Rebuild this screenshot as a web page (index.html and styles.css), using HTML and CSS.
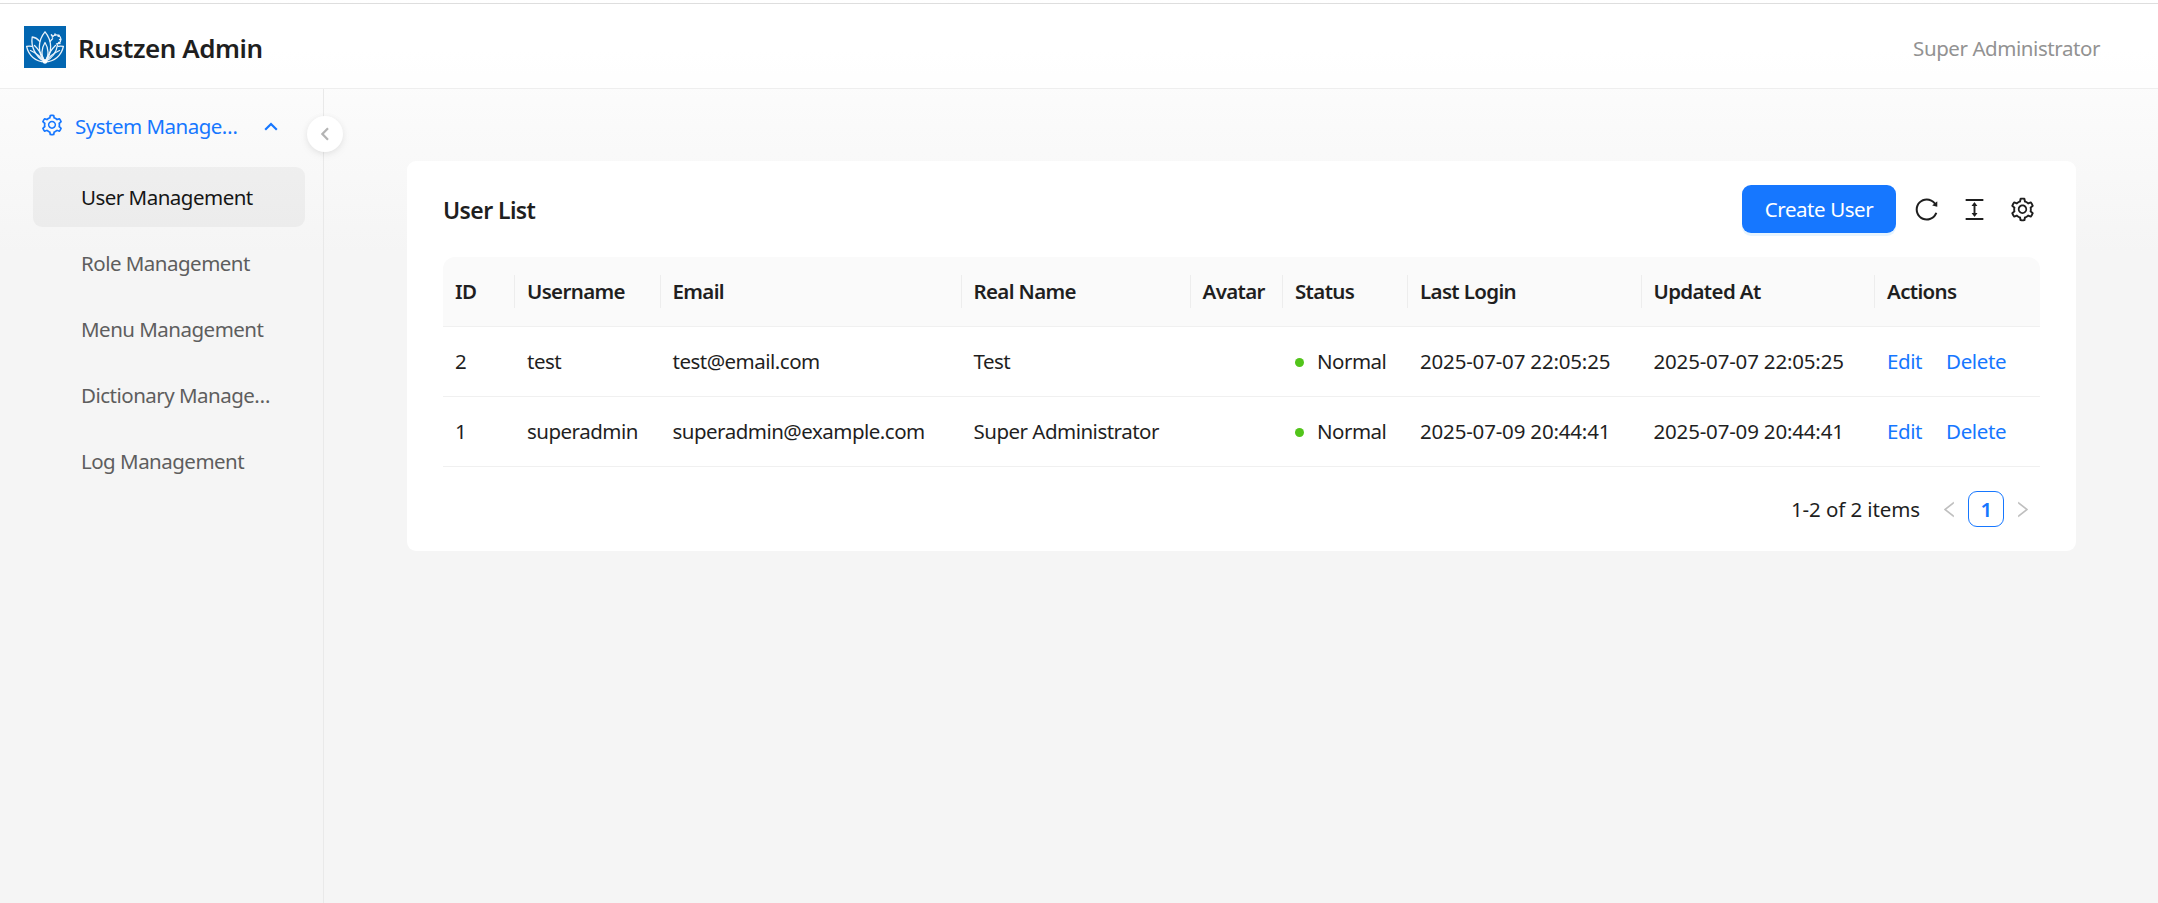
FILE: index.html
```html
<!DOCTYPE html>
<html lang="en">
<head>
<meta charset="utf-8">
<title>Rustzen Admin</title>
<link rel="stylesheet" href="styles.css">
</head>
<body>
<svg class="sprite" aria-hidden="true">
  <symbol id="setting" viewBox="0 0 1024 1024"><path d="M924.8 625.7l-65.5-56c3.1-19 4.7-38.4 4.7-57.8s-1.6-38.8-4.7-57.8l65.5-56a32.03 32.03 0 009.3-35.2l-.9-2.6a443.74 443.74 0 00-79.7-137.9l-1.8-2.1a32.12 32.12 0 00-35.1-9.5l-81.3 28.9c-30-24.6-63.5-44-99.7-57.6l-15.7-85a32.05 32.05 0 00-25.8-25.7l-2.7-.5c-52.1-9.4-106.9-9.4-159 0l-2.7.5a32.05 32.05 0 00-25.8 25.7l-15.8 85.4a351.86 351.86 0 00-99 57.4l-81.9-29.1a32 32 0 00-35.1 9.5l-1.8 2.1a446.02 446.02 0 00-79.7 137.9l-.9 2.6c-4.5 12.5-.8 26.5 9.3 35.2l66.3 56.6c-3.1 18.8-4.6 38-4.6 57.1 0 19.2 1.5 38.4 4.6 57.1L99 625.5a32.03 32.03 0 00-9.3 35.2l.9 2.6c18.1 50.4 44.9 96.9 79.7 137.9l1.8 2.1a32.12 32.12 0 0035.1 9.5l81.9-29.1c29.8 24.5 63.1 43.9 99 57.4l15.8 85.4a32.05 32.05 0 0025.8 25.7l2.7.5a449.4 449.4 0 00159 0l2.7-.5a32.05 32.05 0 0025.8-25.7l15.7-85a350 350 0 0099.7-57.6l81.3 28.9a32 32 0 0035.1-9.5l1.8-2.1c34.8-41.1 61.6-87.5 79.7-137.9l.9-2.6c4.5-12.3.8-26.3-9.3-35zM788.3 465.9c2.5 15.1 3.8 30.6 3.8 46.1s-1.3 31-3.8 46.1l-6.6 40.1 74.7 63.9a370.03 370.03 0 01-42.6 73.6L721 702.8l-31.4 25.8c-23.9 19.6-50.5 35-79.3 45.8l-38.1 14.3-17.9 97a377.5 377.5 0 01-85 0l-17.9-97.2-37.8-14.5c-28.5-10.8-55-26.2-78.7-45.7l-31.4-25.9-93.4 33.2c-17-22.9-31.2-47.6-42.6-73.6l75.5-64.5-6.5-40c-2.4-14.9-3.7-30.3-3.7-45.5 0-15.3 1.2-30.6 3.7-45.5l6.5-40-75.5-64.5c11.3-26.1 25.6-50.7 42.6-73.6l93.4 33.2 31.4-25.9c23.7-19.5 50.2-34.9 78.7-45.7l37.9-14.3 17.9-97.2c28.1-3.2 56.8-3.2 85 0l17.9 97 38.1 14.3c28.7 10.8 55.4 26.2 79.3 45.8l31.4 25.8 92.8-32.9c17 22.9 31.2 47.6 42.6 73.6L781.8 426l6.5 39.9zM512 326c-97.2 0-176 78.8-176 176s78.8 176 176 176 176-78.8 176-176-78.8-176-176-176zm79.2 255.2A111.6 111.6 0 01512 614c-29.9 0-58-11.7-79.2-32.8A111.6 111.6 0 01400 502c0-29.9 11.7-58 32.8-79.2C454 401.6 482.1 390 512 390c29.9 0 58 11.6 79.2 32.8A111.6 111.6 0 01624 502c0 29.9-11.7 58-32.8 79.2z"/></symbol>
  <symbol id="reload" viewBox="0 0 1024 1024"><path d="M909.1 209.3l-56.4 44.1C775.8 155.1 656.2 92 521.9 92 290 92 102.3 279.5 102 511.5 101.7 743.7 289.8 932 521.9 932c181.3 0 335.8-115 394.6-276.1 1.5-4.2-.7-8.9-4.9-10.3l-56.7-19.5a8 8 0 00-10.1 4.8c-1.8 5-3.8 10-5.9 14.9-17.3 41-42.1 77.8-73.7 109.4A344.77 344.77 0 01655.9 829c-42.3 17.9-87.4 27-133.8 27-46.5 0-91.5-9.1-133.8-27A341.5 341.5 0 01279 755.2a342.16 342.16 0 01-73.7-109.4c-17.9-42.4-27-87.4-27-133.9s9.1-91.5 27-133.9c17.3-41 42.1-77.8 73.7-109.4 31.6-31.6 68.4-56.4 109.3-73.8 42.3-17.9 87.4-27 133.8-27 46.5 0 91.5 9.1 133.8 27a341.5 341.5 0 01109.3 73.8c9.9 9.9 19.2 20.4 27.8 31.4l-60.2 47a8 8 0 003 14.1l175.6 43c5 1.2 9.9-2.6 9.9-7.7l.8-180.9c-.1-6.6-7.8-10.3-13-6.2z"/></symbol>
  <symbol id="density" viewBox="0 0 1024 1024"><path d="M840 836H184c-4.4 0-8 3.6-8 8v60c0 4.4 3.6 8 8 8h656c4.4 0 8-3.6 8-8v-60c0-4.4-3.6-8-8-8zm0-724H184c-4.4 0-8 3.6-8 8v60c0 4.4 3.6 8 8 8h656c4.4 0 8-3.6 8-8v-60c0-4.4-3.6-8-8-8zM610.8 378c6 0 9.4-7 5.7-11.7L515.7 238.7a7.14 7.14 0 00-11.3 0L403.6 366.3a7.23 7.23 0 005.7 11.7H476v268h-62.8c-6 0-9.4 7-5.7 11.7l100.8 127.5c2.9 3.7 8.5 3.7 11.3 0l100.8-127.5c3.7-4.7.4-11.7-5.7-11.7H548V378h62.8z"/></symbol>
  <symbol id="left" viewBox="0 0 1024 1024"><path d="M724 218.3V141c0-6.7-7.7-10.4-12.9-6.3L260.3 486.8a31.86 31.86 0 000 50.3l450.8 352.1c5.3 4.1 12.9.4 12.9-6.3v-77.3c0-4.9-2.3-9.6-6.1-12.6l-360-281 360-281.1c3.8-3 6.1-7.7 6.1-12.6z"/></symbol>
</svg>

<header class="header">
  <div class="brand">
    <svg class="logo" viewBox="0 0 42 42">
      <rect width="42" height="42" fill="#0266b1"/>
      <g fill="none" stroke="#e9f2fa" stroke-width="1.3" stroke-linecap="round" stroke-linejoin="round">
        <path d="M21 36C13 27 14 14 21 5.8C28 14 29 27 21 36Z"/>
        <path d="M21 36C16.500 30 17.500 22 21 16.500C24.500 22 25.500 30 21 36Z"/>
        <path d="M15.600 15.300C13.500 12.800 11.200 11.300 8.200 11C6.800 20 10.500 30 21 36"/>
        <path d="M21 36C18 29 15.500 24 10.500 19.500"/>
        <path d="M7.800 20.300C6 20 4.300 20 2.600 20.400C4.500 29.500 11.500 35.500 21 36"/>
        <path d="M21 36C16.500 30.500 12.500 27 6.500 24.500"/>
        <path d="M26.300 15.300C27 14.300 27.800 13.500 28.600 12.800M33.500 19C32.500 26 28.500 32 21 36"/>
        <path d="M21 36C24 29 26.500 24 31.500 19.500"/>
        <path d="M34.200 20.300C36 20 37.700 20 39.400 20.400C37.500 29.500 30.500 35.500 21 36"/>
        <path d="M21 36C25.500 30.500 29.500 27 35.500 24.500"/>
        <path d="M28.300 11.200A4.600 4.600 0 1 1 32.500 18"/>
        <path d="M28.300 10L27.500 9M31 9V8.200M34.300 10.200L35 9.300M35.700 13.500H36.500M34.800 16.600L35.800 17.400" stroke-width="1.700"/>
      </g>
      <circle cx="21" cy="35.500" r="2.200" fill="#fff"/>
    </svg>
    <h1 class="brand-name">Rustzen Admin</h1>
  </div>
  <span class="account">Super Administrator</span>
</header>

<div class="layout">
  <aside class="sidebar">
    <nav class="menu">
      <a class="menu-parent">
        <svg class="menu-icon"><use href="#setting"/></svg>
        <span class="menu-title">System Manage…</span>
        <svg class="menu-arrow" viewBox="0 0 14 9"><path d="M1.200 7.800L7 2L12.800 7.800"/></svg>
      </a>
      <a class="menu-item active">User Management</a>
      <a class="menu-item">Role Management</a>
      <a class="menu-item">Menu Management</a>
      <a class="menu-item">Dictionary Manage…</a>
      <a class="menu-item">Log Management</a>
    </nav>
    <button class="collapse" aria-label="Collapse"><svg viewBox="0 0 8 14"><path d="M7 1.200L1.400 7L7 12.800"/></svg></button>
  </aside>

  <main class="content">
    <section class="card">
      <div class="toolbar">
        <h2 class="card-title">User List</h2>
        <div class="tools">
          <button class="primary">Create User</button>
          <svg class="tool"><use href="#reload"/></svg>
          <svg class="tool"><use href="#density"/></svg>
          <svg class="tool"><use href="#setting"/></svg>
        </div>
      </div>
      <table class="table">
        <colgroup>
          <col class="c-id"><col class="c-username"><col class="c-email"><col class="c-name"><col class="c-avatar"><col class="c-status"><col class="c-date"><col class="c-date"><col class="c-actions">
        </colgroup>
        <thead>
          <tr><th>ID</th><th>Username</th><th>Email</th><th>Real Name</th><th>Avatar</th><th>Status</th><th>Last Login</th><th>Updated At</th><th>Actions</th></tr>
        </thead>
        <tbody>
          <tr><td>2</td><td>test</td><td>test@email.com</td><td>Test</td><td></td><td><span class="status">Normal</span></td><td class="date">2025-07-07 22:05:25</td><td class="date">2025-07-07 22:05:25</td><td><div class="actions"><a>Edit</a><a>Delete</a></div></td></tr>
          <tr><td>1</td><td>superadmin</td><td>superadmin@example.com</td><td>Super Administrator</td><td></td><td><span class="status">Normal</span></td><td class="date">2025-07-09 20:44:41</td><td class="date">2025-07-09 20:44:41</td><td><div class="actions"><a>Edit</a><a>Delete</a></div></td></tr>
        </tbody>
      </table>
      <div class="pagination">
        <span class="total">1-2 of 2 items</span>
        <svg class="page-arrow"><use href="#left"/></svg>
        <span class="page">1</span>
        <svg class="page-arrow next"><use href="#left"/></svg>
      </div>
    </section>
  </main>
</div>
</body>
</html>
```
FILE: styles.css
```css
* { box-sizing: border-box; }
body {
  margin: 0;
  height: 903px;
  padding-top: 3px;
  display: flex;
  flex-direction: column;
  overflow: hidden;
  font: 20.5px/33px "Noto Sans", "Open Sans", sans-serif;
  letter-spacing: -0.51px;
  color: #1f1f1f;
  background: linear-gradient(#fff, #f5f5f5 28%);
}
.sprite { position: absolute; width: 0; height: 0; }
svg { display: block; flex: none; fill: currentColor; }
h1, h2 { margin: 0; font-weight: 600; }
button { border: 0; padding: 0; font: inherit; letter-spacing: inherit; }

.header {
  flex: none;
  height: 86px;
  padding: 2px 58px 0 24px;
  display: flex;
  align-items: center;
  justify-content: space-between;
  border-top: 1px solid #dedede;
  border-bottom: 1px solid #eee;
  background: rgba(255, 255, 255, .7);
}
.brand { display: flex; align-items: center; gap: 12px; }
.logo { width: 42px; height: 42px; }
.brand-name { font-size: 26px; letter-spacing: -0.45px; padding-top: 2px; }
.account { color: #929292; padding-top: 2px; letter-spacing: -0.43px; }

.layout { flex: 1; display: flex; }
.sidebar {
  position: relative;
  width: 324px;
  flex: none;
  border-right: 1px solid #e9e9e9;
}
.menu { padding: 6px 18px 0 33px; display: flex; flex-direction: column; gap: 6px; }
.menu-parent {
  height: 66px;
  padding: 0 27px 4px 7px;
  display: flex;
  align-items: center;
  color: #1677ff;
}
.menu-icon { width: 24px; height: 24px; margin: -3px 11px 0 0; }
.menu-title { flex: 1; }
.menu-arrow { width: 14px; height: 9px; fill: none; stroke: #1677ff; stroke-width: 2.2; margin-top: 0; }
.menu-item {
  height: 60px;
  padding: 0 0 0 48px;
  border-radius: 9px;
  line-height: 61px;
  color: #5e5e5e;
}
.menu-item.active { background: rgba(0, 0, 0, .04); color: #161616; }
.collapse {
  position: absolute;
  top: 27px;
  right: -20px;
  width: 36px;
  height: 36px;
  display: grid;
  place-items: center;
  border-radius: 50%;
  background: #fff;
  box-shadow: 0 3px 12px -3px rgba(0, 0, 0, .1), 0 1px 6px rgba(25, 15, 15, .05);
}
.collapse svg { width: 8px; height: 14px; margin: -1px 0 0 -1px; fill: none; stroke: #b4b4b4; stroke-width: 2.2; }

.content { flex: 1; padding: 72px 82px 0 83px; }
.card { height: 390px; padding: 24px 36px 0; border-radius: 9px; background: #fff; }
.toolbar { height: 72px; display: flex; align-items: flex-start; justify-content: space-between; }
.card-title { font-size: 23px; line-height: 51px; letter-spacing: -0.6px; }
.tools { display: flex; align-items: center; gap: 21px; padding-right: 4px; }
.tool { width: 27px; height: 27px; margin-top: 1px; }
.primary {
  width: 154px;
  height: 48px;
  margin-right: -4px;
  padding-top: 1px;
  border-radius: 9px;
  color: #fff;
  background: #1677ff;
  box-shadow: 0 3px 0 rgba(5, 145, 255, .1);
  letter-spacing: -0.42px;
}

.table { width: 1597px; table-layout: fixed; border-collapse: separate; border-spacing: 0; }
.c-id { width: 72px; }
.c-username { width: 145.5px; }
.c-email { width: 301px; }
.c-name { width: 229px; }
.c-avatar { width: 92.5px; }
.c-status { width: 125px; }
.c-date { width: 233.5px; }
.c-actions { width: 165px; }
th, td { height: 70px; padding: 0 0 0 12px; text-align: left; white-space: nowrap; border-bottom: 1px solid #f0f0f0; }
th { position: relative; font-weight: 600; letter-spacing: -0.65px; background: #fafafa; }
th:first-child { border-top-left-radius: 12px; }
th:last-child { border-top-right-radius: 12px; }
th:not(:last-child)::after {
  content: "";
  position: absolute;
  top: 18px;
  right: 0;
  width: 1px;
  height: 33px;
  background: #ededed;
}
.date { letter-spacing: -0.18px; }
.status { display: flex; align-items: center; gap: 13px; }
.status::before { content: ""; width: 9px; height: 9px; margin-top: 1px; border-radius: 50%; background: #52c41a; }
.actions { display: flex; gap: 24px; color: #1677ff; letter-spacing: -0.4px; }

.pagination { display: flex; align-items: center; justify-content: flex-end; padding: 24px 7px 0 0; }
.total { padding-top: 1px; margin-right: 19px; letter-spacing: -0.1px; }
.page-arrow { width: 21px; height: 21px; color: #bfbfbf; }
.next { transform: scaleX(-1); }
.page {
  width: 36px;
  height: 36px;
  margin: 0 8px;
  border: 1px solid #1677ff;
  border-radius: 9px;
  line-height: 34px;
  text-align: center;
  font-weight: 600;
  color: #1677ff;
}
```
